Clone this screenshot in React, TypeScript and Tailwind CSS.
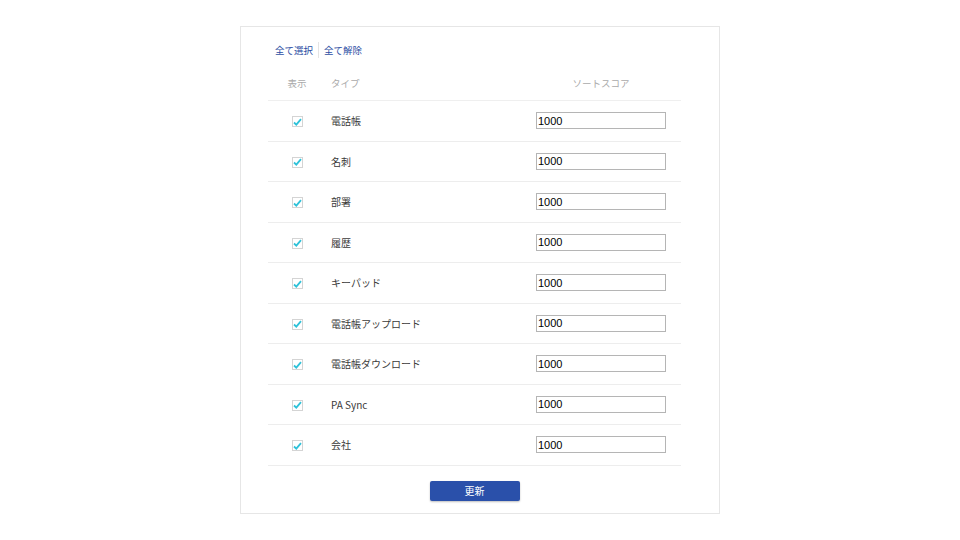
import React from 'react';

const rows = [
  '電話帳',
  '名刺',
  '部署',
  '履歴',
  'キーパッド',
  '電話帳アップロード',
  '電話帳ダウンロード',
  'PA Sync',
  '会社',
];

const jp = "font-['Noto_Sans_CJK_JP','Noto_Sans',sans-serif]";

function Check() {
  return (
    <span className="flex h-[11px] w-[11px] items-center justify-center border border-[#d4d4d4] bg-white">
      <svg width="9" height="8" viewBox="0 0 9 8">
        <path d="M1 4.5 L3.3 6.6 L8 1.2" fill="none" stroke="#2fc2d9" strokeWidth="1.8" />
      </svg>
    </span>
  );
}

export default function App() {
  return (
    <div className="min-h-[540px] w-full bg-white pt-[26px]">
      <div className="mx-auto w-[480px] border border-[#e6e6e6] bg-white pl-[27px] pr-[38px] pt-[15px] pb-[12px]">
        {/* select / clear */}
        <div className={`flex h-4 items-center text-[9.5px] text-[#2c4ea3] ${jp}`}>
          <span className="pl-[7px]">全て選択</span>
          <span className="mx-[5px] h-4 w-px bg-[#e4e4e4]" />
          <span>全て解除</span>
        </div>

        {/* header */}
        <div className={`mt-2 grid h-[35px] grid-cols-[58px_195px_1fr] items-center border-b border-[#efefef] text-[9.5px] text-[#aaaaaa] ${jp}`}>
          <span className="text-center">表示</span>
          <span className="pl-[5px]">タイプ</span>
          <span className="text-center">ソートスコア</span>
        </div>

        {rows.map((name) => (
          <div
            key={name}
            className="grid h-[40.5px] grid-cols-[58px_195px_1fr] items-center border-b border-[#ededed]"
          >
            <div className="flex justify-center pt-[2px]">
              <Check />
            </div>
            <span className={`pl-[5px] text-[10px] text-[#3a3a3a] ${jp}`}>{name}</span>
            <div className="flex justify-center">
              <input
                readOnly
                value="1000"
                className="h-[17px] w-[130px] border border-[#b5b5b5] bg-white pl-[1px] font-['Liberation_Sans',Arial,sans-serif] text-[11px] text-black outline-none"
              />
            </div>
          </div>
        ))}

        <div className="mt-[15px] flex justify-center">
          <button className={`h-5 w-[90px] rounded-[2px] bg-[#2a50aa] text-[10px] text-white shadow-[0_1px_2px_rgba(0,0,0,0.25)] ${jp}`}>
            更新
          </button>
        </div>
      </div>
    </div>
  );
}
